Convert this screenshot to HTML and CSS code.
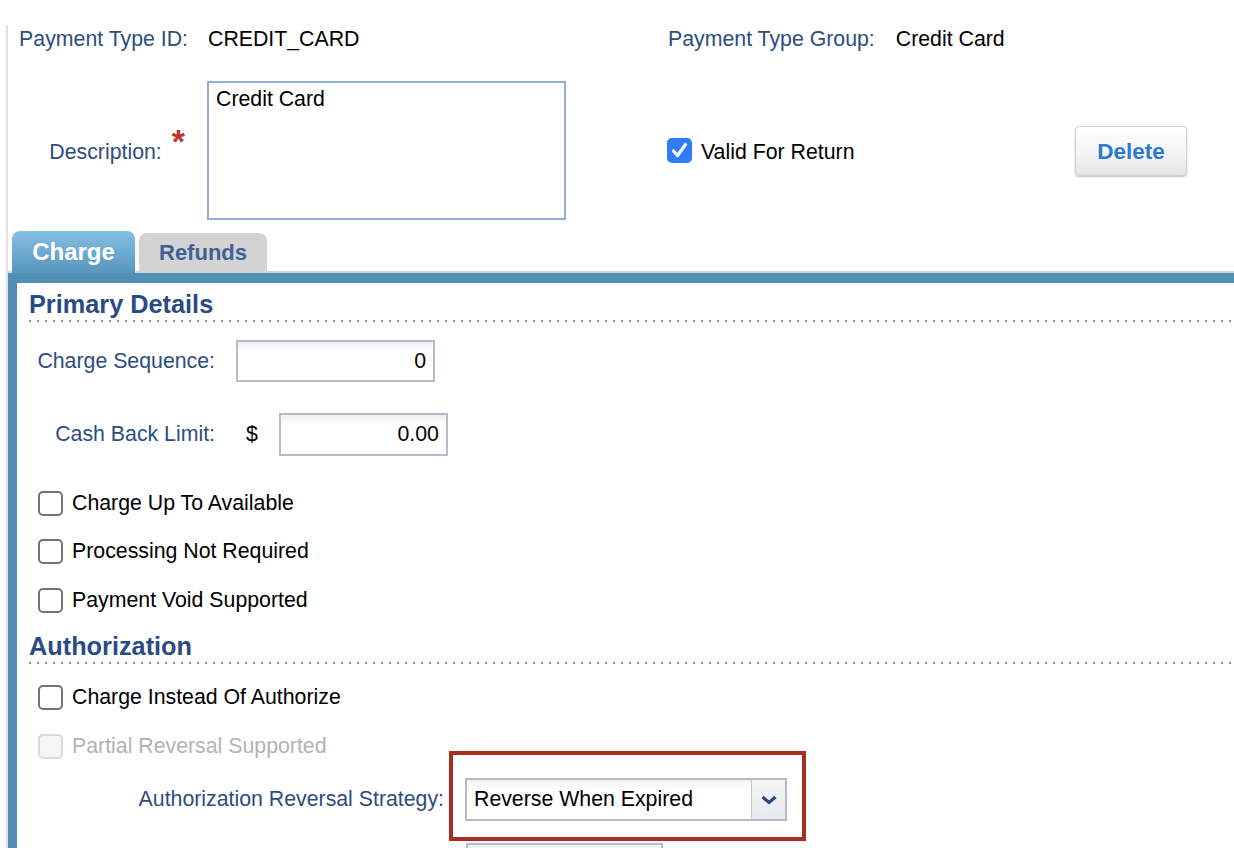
FILE: index.html
```html
<!DOCTYPE html>
<html lang="en">
<head>
<meta charset="utf-8">
<title>Payment Type</title>
<link rel="stylesheet" href="styles.css">
</head>
<body>
<div class="page">
  <div class="row row-ids">
    <div class="half">
      <span class="lbl lbl-w">Payment Type ID:</span>
      <span class="val">CREDIT_CARD</span>
    </div>
    <div class="half-r">
      <span class="lbl">Payment Type Group:</span>
      <span class="val val-g">Credit Card</span>
    </div>
  </div>
  <div class="row row-desc">
    <div class="half">
      <div class="lbl lbl-w">Description:<span class="req">*</span></div>
      <div class="textarea">Credit Card</div>
    </div>
    <div class="half-r">
      <div class="check check-valid">
        <span class="box checked"><svg width="21" height="21" viewBox="0 0 21 21"><path d="M4.5 11 L8.5 15.5 L16.5 4.5" fill="none" stroke="#fff" stroke-width="3.2" stroke-linecap="round" stroke-linejoin="round"/></svg></span>
        <span class="check-text">Valid For Return</span>
      </div>
      <button class="btn">Delete</button>
    </div>
  </div>

  <div class="tabs">
    <div class="tab tab-active">Charge</div>
    <div class="tab tab-ref">Refunds</div>
  </div>

  <div class="panel">
    <h2 class="sec">Primary Details</h2>
    <div class="field f-seq">
      <span class="flbl">Charge Sequence:</span>
      <div class="inp inp-seq">0</div>
    </div>
    <div class="field f-cash">
      <span class="flbl">Cash Back Limit:</span>
      <span class="cur">$</span>
      <div class="inp inp-cash">0.00</div>
    </div>
    <div class="check cb cb-first"><span class="box"></span><span>Charge Up To Available</span></div>
    <div class="check cb"><span class="box"></span><span>Processing Not Required</span></div>
    <div class="check cb"><span class="box"></span><span>Payment Void Supported</span></div>

    <h2 class="sec sec-auth">Authorization</h2>
    <div class="check cb cb-first2"><span class="box"></span><span>Charge Instead Of Authorize</span></div>
    <div class="check cb disabled"><span class="box"></span><span>Partial Reversal Supported</span></div>
    <div class="field f-strat">
      <span class="flbl flbl-wide">Authorization Reversal Strategy:</span>
      <div class="select">
        <span class="select-text">Reverse When Expired</span>
        <span class="select-arrow"><svg width="18" height="10" viewBox="0 0 18 10"><path d="M2.5 2 L9 7.5 L15.5 2" fill="none" stroke="#2c4a7e" stroke-width="3.2"/></svg></span>
      </div>
      <div class="highlight"></div>
    </div>
    <div class="field f-next">
      <span class="flbl flbl-wide"></span>
      <div class="inp inp-next"></div>
    </div>
  </div>
</div>
</body>
</html>
```

FILE: styles.css
```css
html, body {
  margin: 0;
  padding: 0;
  background: #fff;
}
body {
  font-family: "Liberation Sans", Arial, Helvetica, sans-serif;
  font-size: 21.3px;
  color: #000;
  overflow: hidden;
}
.page {
  margin: 25px 0 0 6px;
  border-left: 2px solid #e2e2e2;
}
.row {
  display: flex;
}
.row-ids {
  height: 28px;
  line-height: 28px;
}
.half {
  width: 660px;
  flex: none;
  display: flex;
  align-items: center;
}
.half-r {
  flex: 1;
  display: flex;
  align-items: center;
  padding-right: 47px;
}
.lbl {
  color: #2d4d7e;
}
.lbl-w {
  width: 180px;
  flex: none;
  text-align: right;
}
.val {
  margin-left: 20px;
}
.val-g {
  margin-left: 21px;
}
.row-desc {
  margin-top: 28px;
  height: 139px;
}
.req {
  display: inline-block;
  color: #c0342a;
  font-weight: bold;
  font-size: 34px;
  line-height: 20px;
  margin-left: 10px;
  margin-right: 3px;
  position: relative;
  top: -6px;
}
.textarea {
  margin-left: 19px;
  width: 359px;
  height: 139px;
  box-sizing: border-box;
  border: 2px solid #8eafda;
  padding: 4px 7px;
  line-height: 24px;
  background: #fff;
}
.check {
  display: flex;
  align-items: center;
}
.check-valid {
  margin-left: -1px;
}
.check-text {
  position: relative;
  top: 2px;
}
.box {
  width: 25px;
  height: 25px;
  box-sizing: border-box;
  border: 2px solid #737373;
  border-radius: 5px;
  margin-right: 9px;
  flex: none;
  background: #fff;
  display: flex;
  align-items: center;
  justify-content: center;
}
.box.checked {
  background: #2f7cf5;
  border-color: #2f7cf5;
}
.btn {
  margin-left: auto;
  width: 112px;
  height: 50px;
  box-sizing: border-box;
  border: 1px solid #d0d0d0;
  border-radius: 4px;
  background: linear-gradient(#ffffff, #f3f3f3 60%, #e4e4e4);
  box-shadow: 0 1px 2px rgba(0, 0, 0, 0.25);
  font-family: "Liberation Sans", Arial, Helvetica, sans-serif;
  font-size: 22.5px;
  font-weight: bold;
  color: #2c79cf;
  padding: 2px 0 0;
}

.tabs {
  display: flex;
  align-items: flex-end;
  gap: 4px;
  height: 42px;
  margin-top: 11px;
  padding-left: 4px;
  background: linear-gradient(#d4d4d4, #d4d4d4) left bottom / 100% 2px no-repeat;
}
.tab {
  border-radius: 8px 8px 0 0;
  font-weight: bold;
  text-align: center;
}
.tab-active {
  width: 123px;
  height: 42px;
  line-height: 42px;
  font-size: 24px;
  color: #fff;
  background: linear-gradient(#84c0e2, #5895bd);
}
.tab-ref {
  width: 128px;
  height: 40px;
  line-height: 40px;
  font-size: 22px;
  color: #3e6097;
  background: #d3d3d3;
}

.panel {
  border-top: 10px solid #518fb5;
  border-left: 9px solid #518fb5;
  padding-bottom: 40px;
}
.sec {
  margin: 0 0 0 12px;
  padding: 7px 0 4px;
  font-size: 25.3px;
  line-height: 28px;
  font-weight: bold;
  color: #2c4a84;
  background: linear-gradient(to right, #8a8a8a 2px, transparent 2px) left bottom / 8px 2px repeat-x;
}
.sec-auth {
  margin-top: 9px;
}
.field {
  display: flex;
  align-items: center;
}
.flbl {
  width: 198px;
  flex: none;
  text-align: right;
  color: #2d4d7e;
}
.flbl-wide {
  width: 427px;
}
.inp {
  margin-left: 21px;
  height: 42px;
  box-sizing: border-box;
  border: 2px solid #b6bacb;
  text-align: right;
  padding-right: 7px;
  line-height: 38px;
  background: linear-gradient(#efefef, #fff 10px);
}
.f-seq {
  margin-top: 18px;
}
.inp-seq {
  width: 199px;
}
.f-cash {
  margin-top: 31px;
}
.cur {
  margin-left: 31px;
}
.inp-cash {
  width: 169px;
  height: 43px;
}
.cb {
  height: 32px;
  margin-left: 21px;
  margin-top: 16.5px;
}
.cb-first {
  margin-top: 31px;
}
.cb-first2 {
  margin-top: 17px;
}
.cb.disabled {
  color: #b3b3b3;
  margin-top: 17px;
}
.cb.disabled .box {
  border-color: #dadada;
  background: #f6f6f6;
}
.f-strat {
  position: relative;
  margin-top: 16px;
}
.select {
  margin-left: 21px;
  width: 322px;
  height: 43px;
  box-sizing: border-box;
  border: 2px solid #b6bacb;
  display: flex;
  background: linear-gradient(#f2f2f2, #fff 10px);
}
.select-text {
  flex: 1;
  padding-left: 7px;
  line-height: 39px;
}
.select-arrow {
  width: 33px;
  border-left: 1px solid #c4c7d3;
  background: linear-gradient(#f4f5f8, #e8eaef);
  display: flex;
  align-items: center;
  justify-content: center;
}
.highlight {
  position: absolute;
  left: 432px;
  top: -27px;
  width: 357px;
  height: 90px;
  box-sizing: border-box;
  border: 4px solid #a72e20;
  pointer-events: none;
}
.f-next {
  margin-top: 22px;
}
.inp-next {
  width: 197px;
  margin-left: 22px;
}
```
